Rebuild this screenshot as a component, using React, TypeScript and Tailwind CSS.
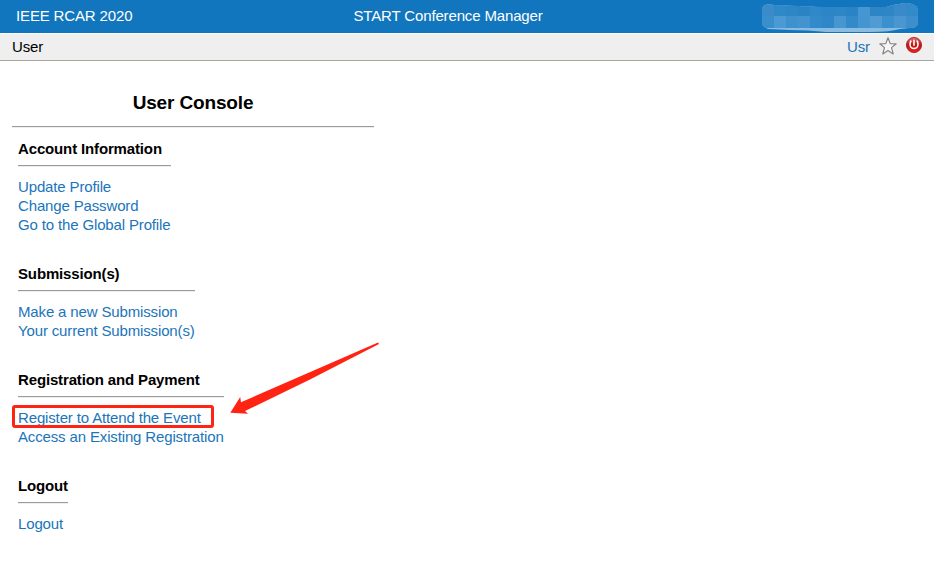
import React from "react";

type Section = { title: string; width: string; links: string[]; marked?: number };

const sections: Section[] = [
  { title: "Account Information", width: "w-[153px]", links: ["Update Profile", "Change Password", "Go to the Global Profile"] },
  { title: "Submission(s)", width: "w-[177px]", links: ["Make a new Submission", "Your current Submission(s)"] },
  { title: "Registration and Payment", width: "w-[206px]", links: ["Register to Attend the Event", "Access an Existing Registration"], marked: 0 },
  { title: "Logout", width: "w-[50px]", links: ["Logout"] },
];

function Rule() {
  return <div className="h-[2px] border-t border-[#9a9a9a] border-b border-b-[#eeeeee]" />;
}

// Pixelated patch that hides the account name, cells of 12px.
const cells: [number, number, string][] = [
  [0, 0, "#398cc9"], [12, 0, "#2f88c7"], [24, 0, "#2d86c6"], [36, 0, "#2a83c5"], [48, 0, "#3088c8"], [60, 0, "#2c85c6"],
  [72, 0, "#2f86c6"], [84, 0, "#2a83c5"], [96, 0, "#4696d1"], [108, 0, "#2d85c6"], [120, 0, "#2e86c7"], [132, 0, "#388bc8"], [144, 0, "#338ac9"],
  [0, 12, "#398ecc"], [12, 12, "#4c9ad4"], [24, 12, "#3f91ce"], [36, 12, "#4393ce"], [48, 12, "#338aca"], [60, 12, "#2f87c8"],
  [72, 12, "#4796d1"], [84, 12, "#338ac9"], [96, 12, "#4595d0"], [108, 12, "#509bd3"], [120, 12, "#3c90ce"], [132, 12, "#4996d0"], [144, 12, "#3c8fcc"],
];

function Mosaic() {
  return (
    <svg className="block" width="160" height="33" viewBox="760 0 160 33" aria-hidden="true">
      <defs>
        <clipPath id="patch">
          <path d="M765 5Q768 3.5 774 5L820 7H886Q894 4 902 3.5Q907 2.5 912 4Q918 6 918 10V22Q918 28 910 28L900 29Q890 32 870 32H826Q808 30 790 30L768 29Q762 27 762 22V11Q762 6 765 5Z" />
        </clipPath>
      </defs>
      <g clipPath="url(#patch)" shapeRendering="crispEdges">
        <rect x="760" y="2" width="160" height="31" fill="#8abce1" />
        {cells.map(([x, y, fill]) => (
          <rect key={`${x}-${y}`} x={762 + x} y={y === 0 ? 2 : 16} width="12" height={y === 0 ? 14 : 12} fill={fill} />
        ))}
      </g>
    </svg>
  );
}

function Power() {
  return (
    <svg className="block" width="16" height="16" viewBox="0 0 16 16" aria-hidden="true">
      <defs>
        <linearGradient id="pw" x1="0" y1="0" x2="0" y2="1">
          <stop offset="0" stopColor="#e07070" />
          <stop offset=".5" stopColor="#c01414" />
          <stop offset="1" stopColor="#f42020" />
        </linearGradient>
      </defs>
      <circle cx="8" cy="8" r="7.6" fill="url(#pw)" stroke="#a51515" strokeWidth=".8" />
      <path d="M5.2 3.6Q4 5.2 4 7.5A4 4 0 0 0 12 7.5Q12 5.2 10.8 3.6M8 2.8V8.8" fill="none" stroke="#fff" strokeWidth="1.6" />
    </svg>
  );
}

export default function App() {
  return (
    <div className="relative h-[561px] w-[934px] overflow-hidden bg-white font-['Liberation_Sans',Arial,sans-serif] text-[15px] leading-[19px] tracking-[-0.145px] text-black">
      <header className="flex h-[33px] items-start bg-[#1176bd] text-white">
        <div className="w-[353.5px] pt-[6px] pl-4">IEEE RCAR 2020</div>
        <div className="w-[406.5px] pt-[6px]">START Conference Manager</div>
        <Mosaic />
      </header>
      <nav className="mt-px flex h-[27px] items-start justify-between border-b border-[#a8a799] bg-[#efefef] pl-3">
        <span className="pt-[3px]">User</span>
        <div className="flex pr-3">
          <a className="w-[32px] pt-[3px] text-[#1a75bb]">Usr</a>
          <svg className="mt-[3px] mr-[9px] block" width="18" height="18" viewBox="0 0 18 18" aria-hidden="true">
            <path d="M9 .8L11.2 6.6L17.2 6.8L12.5 10.6L14.2 16.9L9 13.4L3.8 16.9L5.5 10.6L.8 6.8L6.8 6.6Z" fill="#f8f8f8" stroke="#858585" strokeWidth="1.2" strokeLinejoin="round" />
          </svg>
          <div className="mt-[3px]"><Power /></div>
        </div>
      </nav>
      <main className="ml-3 w-[362px] pt-[30px]">
        <h1 className="pb-[12px] text-center text-[19px] font-bold leading-[23px]">User Console</h1>
        <Rule />
        <div className="flex flex-col gap-[30px] pt-[11px] pl-[6px]">
          {sections.map((s) => (
            <section key={s.title} className={s.width}>
              <h2 className="mb-[7px] font-bold whitespace-nowrap">{s.title}</h2>
              <Rule />
              <ul className="mt-[10px]">
                {s.links.map((l, i) => (
                  <li key={l} className="relative whitespace-nowrap text-[#1a75bb]">
                    {l}
                    {s.marked === i && (
                      <span className="absolute -top-[3px] -left-[6px] h-[23px] w-[202px] rounded-[3px] border-[3px] border-[#ff2314]" />
                    )}
                  </li>
                ))}
              </ul>
            </section>
          ))}
        </div>
      </main>
      <svg className="absolute top-[340px] left-[228px]" width="154" height="76" viewBox="228 340 154 76" aria-hidden="true">
        <path d="M378 342.6L379 344L310 379.5L245 411L248 413.8L230.3 412.7L240.2 397L241 402.2Z" fill="#ff2314" />
      </svg>
    </div>
  );
}
